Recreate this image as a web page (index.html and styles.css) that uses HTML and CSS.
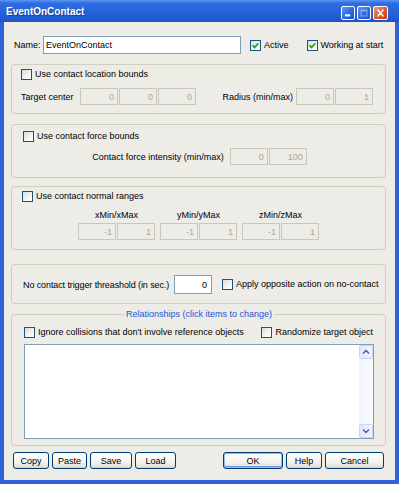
FILE: index.html
```html
<!DOCTYPE html>
<html lang="en">
<head>
    <meta charset="UTF-8">
    <meta name="viewport" content="width=device-width, initial-scale=1.0">
    <title>EventOnContact</title>
    <link rel="stylesheet" href="styles.css">
</head>
<body>
    <div class="window">
        <div class="titlebar">
            <span class="title">EventOnContact</span>
            <div class="caption">
                <span class="cap-btn">
                    <svg viewBox="0 0 14 14"><rect x="3.5" y="8.5" width="6" height="2.5" fill="#fff"/></svg>
                </span>
                <span class="cap-btn">
                    <svg viewBox="0 0 14 14"><rect x="3.5" y="3.5" width="7" height="7" fill="none" stroke="#8fb0ee" stroke-width="1"/><rect x="3.5" y="3.5" width="7" height="1.5" fill="#8fb0ee"/></svg>
                </span>
                <span class="cap-btn close">
                    <svg viewBox="0 0 15 14"><path d="M4.5 3.5 L10.5 10.5 M10.5 3.5 L4.5 10.5" stroke="#fff" stroke-width="1.8" stroke-linecap="round"/></svg>
                </span>
            </div>
        </div>
        <div class="client">
            <div class="name-row">
                <span class="name-label">Name:</span>
                <input class="name-input" type="text" value="EventOnContact">
                <label class="check active-check"><span class="box"><svg viewBox="0 0 9 9"><path d="M1.6 4.3 L3.6 6.4 L7.4 2.2" fill="none" stroke="#21a121" stroke-width="1.7"/></svg></span>Active</label>
                <label class="check start-check"><span class="box"><svg viewBox="0 0 9 9"><path d="M1.6 4.3 L3.6 6.4 L7.4 2.2" fill="none" stroke="#21a121" stroke-width="1.7"/></svg></span>Working at start</label>
            </div>

            <div class="group location">
                <label class="check"><span class="box"></span>Use contact location bounds</label>
                <div class="field-row">
                    <span class="target-label">Target center</span>
                    <div class="fields">
                        <input class="field" disabled value="0">
                        <input class="field" disabled value="0">
                        <input class="field" disabled value="0">
                    </div>
                    <span class="radius-label">Radius (min/max)</span>
                    <div class="fields">
                        <input class="field" disabled value="0">
                        <input class="field" disabled value="1">
                    </div>
                </div>
            </div>

            <div class="group force">
                <label class="check"><span class="box"></span>Use contact force bounds</label>
                <div class="field-row centered">
                    <span class="force-label">Contact force intensity (min/max)</span>
                    <div class="fields">
                        <input class="field" disabled value="0">
                        <input class="field" disabled value="100">
                    </div>
                </div>
            </div>

            <div class="group normal">
                <label class="check"><span class="box"></span>Use contact normal ranges</label>
                <div class="axis-row">
                    <div class="axis">
                        <span class="axis-label">xMin/xMax</span>
                        <div class="fields">
                            <input class="field" disabled value="-1">
                            <input class="field" disabled value="1">
                        </div>
                    </div>
                    <div class="axis">
                        <span class="axis-label">yMin/yMax</span>
                        <div class="fields">
                            <input class="field" disabled value="-1">
                            <input class="field" disabled value="1">
                        </div>
                    </div>
                    <div class="axis">
                        <span class="axis-label">zMin/zMax</span>
                        <div class="fields">
                            <input class="field" disabled value="-1">
                            <input class="field" disabled value="1">
                        </div>
                    </div>
                </div>
            </div>

            <div class="group threshold">
                <span class="threshold-label">No contact trigger threashold (in sec.)</span>
                <input class="threshold-input" type="text" value="0">
                <label class="check opposite-check"><span class="box"></span>Apply opposite action on no-contact</label>
            </div>

            <fieldset class="relations">
                <legend>Relationships (click items to change)</legend>
                <div class="relations-row">
                    <label class="check"><span class="box"></span>Ignore collisions that don't involve reference objects</label>
                    <label class="check"><span class="box"></span>Randomize target object</label>
                </div>
                <div class="listbox">
                    <div class="list-items"></div>
                    <div class="scrollbar">
                        <span class="scroll-btn"><svg viewBox="0 0 12 12"><path d="M3 7.5 L6 4.5 L9 7.5" fill="none" stroke="#4d6185" stroke-width="1.5"/></svg></span>
                        <span class="scroll-track"></span>
                        <span class="scroll-btn"><svg viewBox="0 0 12 12"><path d="M3 4.5 L6 7.5 L9 4.5" fill="none" stroke="#4d6185" stroke-width="1.5"/></svg></span>
                    </div>
                </div>
            </fieldset>

            <div class="footer">
                <div class="btn-group">
                    <button class="btn copy-btn">Copy</button>
                    <button class="btn paste-btn">Paste</button>
                    <button class="btn save-btn">Save</button>
                    <button class="btn load-btn">Load</button>
                </div>
                <div class="btn-group">
                    <button class="btn ok-btn">OK</button>
                    <button class="btn help-btn">Help</button>
                    <button class="btn cancel-btn">Cancel</button>
                </div>
            </div>
        </div>
    </div>
</body>
</html>
```

FILE: styles.css
```css
html {  /* page */
    font-size: 9px;
}
body {
    margin: 0;
    font-family: "Liberation Sans", Arial, sans-serif;
    font-size: 9px;
    color: #000;
    background: #fff;
}
.window {  /* XP window frame */
    width: 399px;
    height: 484px;
    display: flex;
    flex-direction: column;
    box-sizing: border-box;
    background: #2f62d6;
}
.titlebar {  /* blue caption bar */
    height: 22px;
    display: flex;
    align-items: flex-end;
    padding: 0 11px 2px 6px;
    box-sizing: border-box;
    background: linear-gradient(to bottom, #5d97f5 0%, #2f6de2 14%, #2664da 50%, #2159d2 85%, #1d50c4 100%);
}
.title {  /* window title */
    flex: 1;
    color: #fff;
    font-size: 10px;
    font-weight: bold;
    line-height: 14px;
    padding-bottom: 1px;
    text-shadow: 1px 1px 0 #1a3f9c;
}
.caption {  /* min / max / close */
    display: flex;
    gap: 2px;
}
.cap-btn {
    width: 14px;
    height: 14px;
    box-sizing: border-box;
    border: 1px solid #fff;
    border-radius: 2px;
    background: linear-gradient(135deg, #5d97f7, #2a64de 60%, #1d52cf);
    display: flex;
}
.cap-btn svg {
    width: 100%;
    height: 100%;
}
.cap-btn.close {
    width: 15px;
    background: linear-gradient(135deg, #f09a7c, #e15b2f 50%, #c53f17);
}
.client {  /* dialog body */
    flex: 1;
    margin: 0 4px 4px 4px;
    padding: 14px 9px 0 7px;
    background: #edece7;
    display: flex;
    flex-direction: column;
}
.name-row {
    display: flex;
    align-items: center;
    height: 18px;
    padding-left: 3px;
}
.name-label {
    width: 29px;
}
.name-input {
    width: 198px;
    height: 18px;
    box-sizing: border-box;
    border: 1px solid #7f9db9;
    background: #fff;
    font: inherit;
    padding: 0 2px;
    margin: 0;
    outline: none;
}
.check {  /* checkbox with caption */
    display: flex;
    align-items: center;
    gap: 3px;
    white-space: nowrap;
    line-height: 11px;
}
.box {  /* XP checkbox square */
    width: 11px;
    height: 11px;
    box-sizing: border-box;
    border: 1px solid #1c5180;
    background: linear-gradient(135deg, #dcdcd6, #f4f4f0 60%, #fff);
    display: flex;
    flex-shrink: 0;
}
.box svg {
    width: 100%;
    height: 100%;
}
.active-check {
    margin-left: 9px;
}
.start-check {
    margin-left: 18px;
}
.group {  /* rounded group box */
    border: 1px solid #d0d0bf;
    border-radius: 3px;
    margin-top: 10px;
    display: flex;
    flex-direction: column;
}
.location {
    padding: 4px 12px 8px 9px;
    gap: 8px;
}
.force {
    padding: 6px 12px 12px 11px;
    gap: 6px;
}
.normal {
    margin-top: 8px;
    padding: 4px 12px 9px 10px;
}
.field-row {
    display: flex;
    align-items: center;
}
.field-row.centered {
    justify-content: center;
    padding-left: 3px;
}
.target-label {
    width: 59px;
}
.radius-label {
    margin-left: auto;
    margin-right: 3px;
}
.force-label {
    margin-right: 6px;
}
.fields {
    display: flex;
    gap: 1px;
}
.field {  /* disabled number box */
    width: 38px;
    height: 17px;
    box-sizing: border-box;
    border: 1px solid #c9c7ba;
    background: #edece7;
    color: #aca899;
    -webkit-text-fill-color: #aca899;
    opacity: 1;
    font: inherit;
    text-align: right;
    padding: 0 3px 0 0;
    margin: 0;
}
.axis-row {
    display: flex;
    justify-content: center;
    gap: 5px;
    margin-top: 8px;
    padding-left: 2px;
}
.axis {
    display: flex;
    flex-direction: column;
    align-items: center;
    gap: 2px;
}
.axis-label {
    line-height: 11px;
}
.threshold {
    margin-top: 14px;
    flex-direction: row;
    align-items: center;
    padding: 10px 0 9px 11px;
}
.threshold-label {
    width: 151px;
    letter-spacing: -0.1px;
}
.threshold-input {
    width: 38px;
    height: 19px;
    box-sizing: border-box;
    border: 1px solid #7f9db9;
    background: #fff;
    font: inherit;
    text-align: right;
    padding: 0 4px 0 0;
    margin: 0;
}
.opposite-check {
    margin-left: 10px;
}
.relations {  /* group with centered caption */
    border: 1px solid #d0d0bf;
    border-radius: 3px;
    margin: 5px 0 0 0;
    padding: 7px 11px 6px 12px;
    min-inline-size: 0;
}
.relations legend {
    margin: 0 auto;
    padding: 0 2px;
    color: #1f55d6;
    line-height: 11px;
}
.relations-row {
    display: flex;
    justify-content: space-between;
    margin-right: 1px;
}
.listbox {
    margin-top: 6px;
    height: 95px;
    box-sizing: border-box;
    border: 1px solid #7f9db9;
    background: #fff;
    display: flex;
}
.list-items {
    flex: 1;
}
.scrollbar {  /* XP vertical scrollbar */
    width: 14px;
    display: flex;
    flex-direction: column;
    background: linear-gradient(to right, #f1f4fc, #f9fbff);
}
.scroll-btn {
    height: 14px;
    box-sizing: border-box;
    border: 1px solid #c5d6f7;
    border-radius: 2px;
    background: linear-gradient(to right, #dfe9fd, #eef3fe);
    display: flex;
}
.scroll-btn svg {
    width: 100%;
    height: 100%;
}
.scroll-track {
    flex: 1;
}
.footer {
    display: flex;
    justify-content: space-between;
    margin-top: 6px;
    padding: 0 2px;
}
.btn-group {
    display: flex;
    gap: 3px;
}
.btn {  /* XP push button */
    height: 17px;
    box-sizing: border-box;
    border: 1px solid #003c74;
    border-radius: 3px;
    background: linear-gradient(to bottom, #fff, #f3f3ef 60%, #e3e1d8 90%, #d6d0c5);
    font: inherit;
    color: #000;
    padding: 0;
    margin: 0;
}
.copy-btn { width: 36px; }
.paste-btn { width: 35px; }
.save-btn { width: 42px; }
.load-btn { width: 41px; }
.ok-btn {
    width: 60px;
    box-shadow: inset 0 0 0 1px #97b8f1, inset 0 -1px 0 1px #6f97e4;
}
.help-btn { width: 36px; }
.cancel-btn { width: 59px; }
```
